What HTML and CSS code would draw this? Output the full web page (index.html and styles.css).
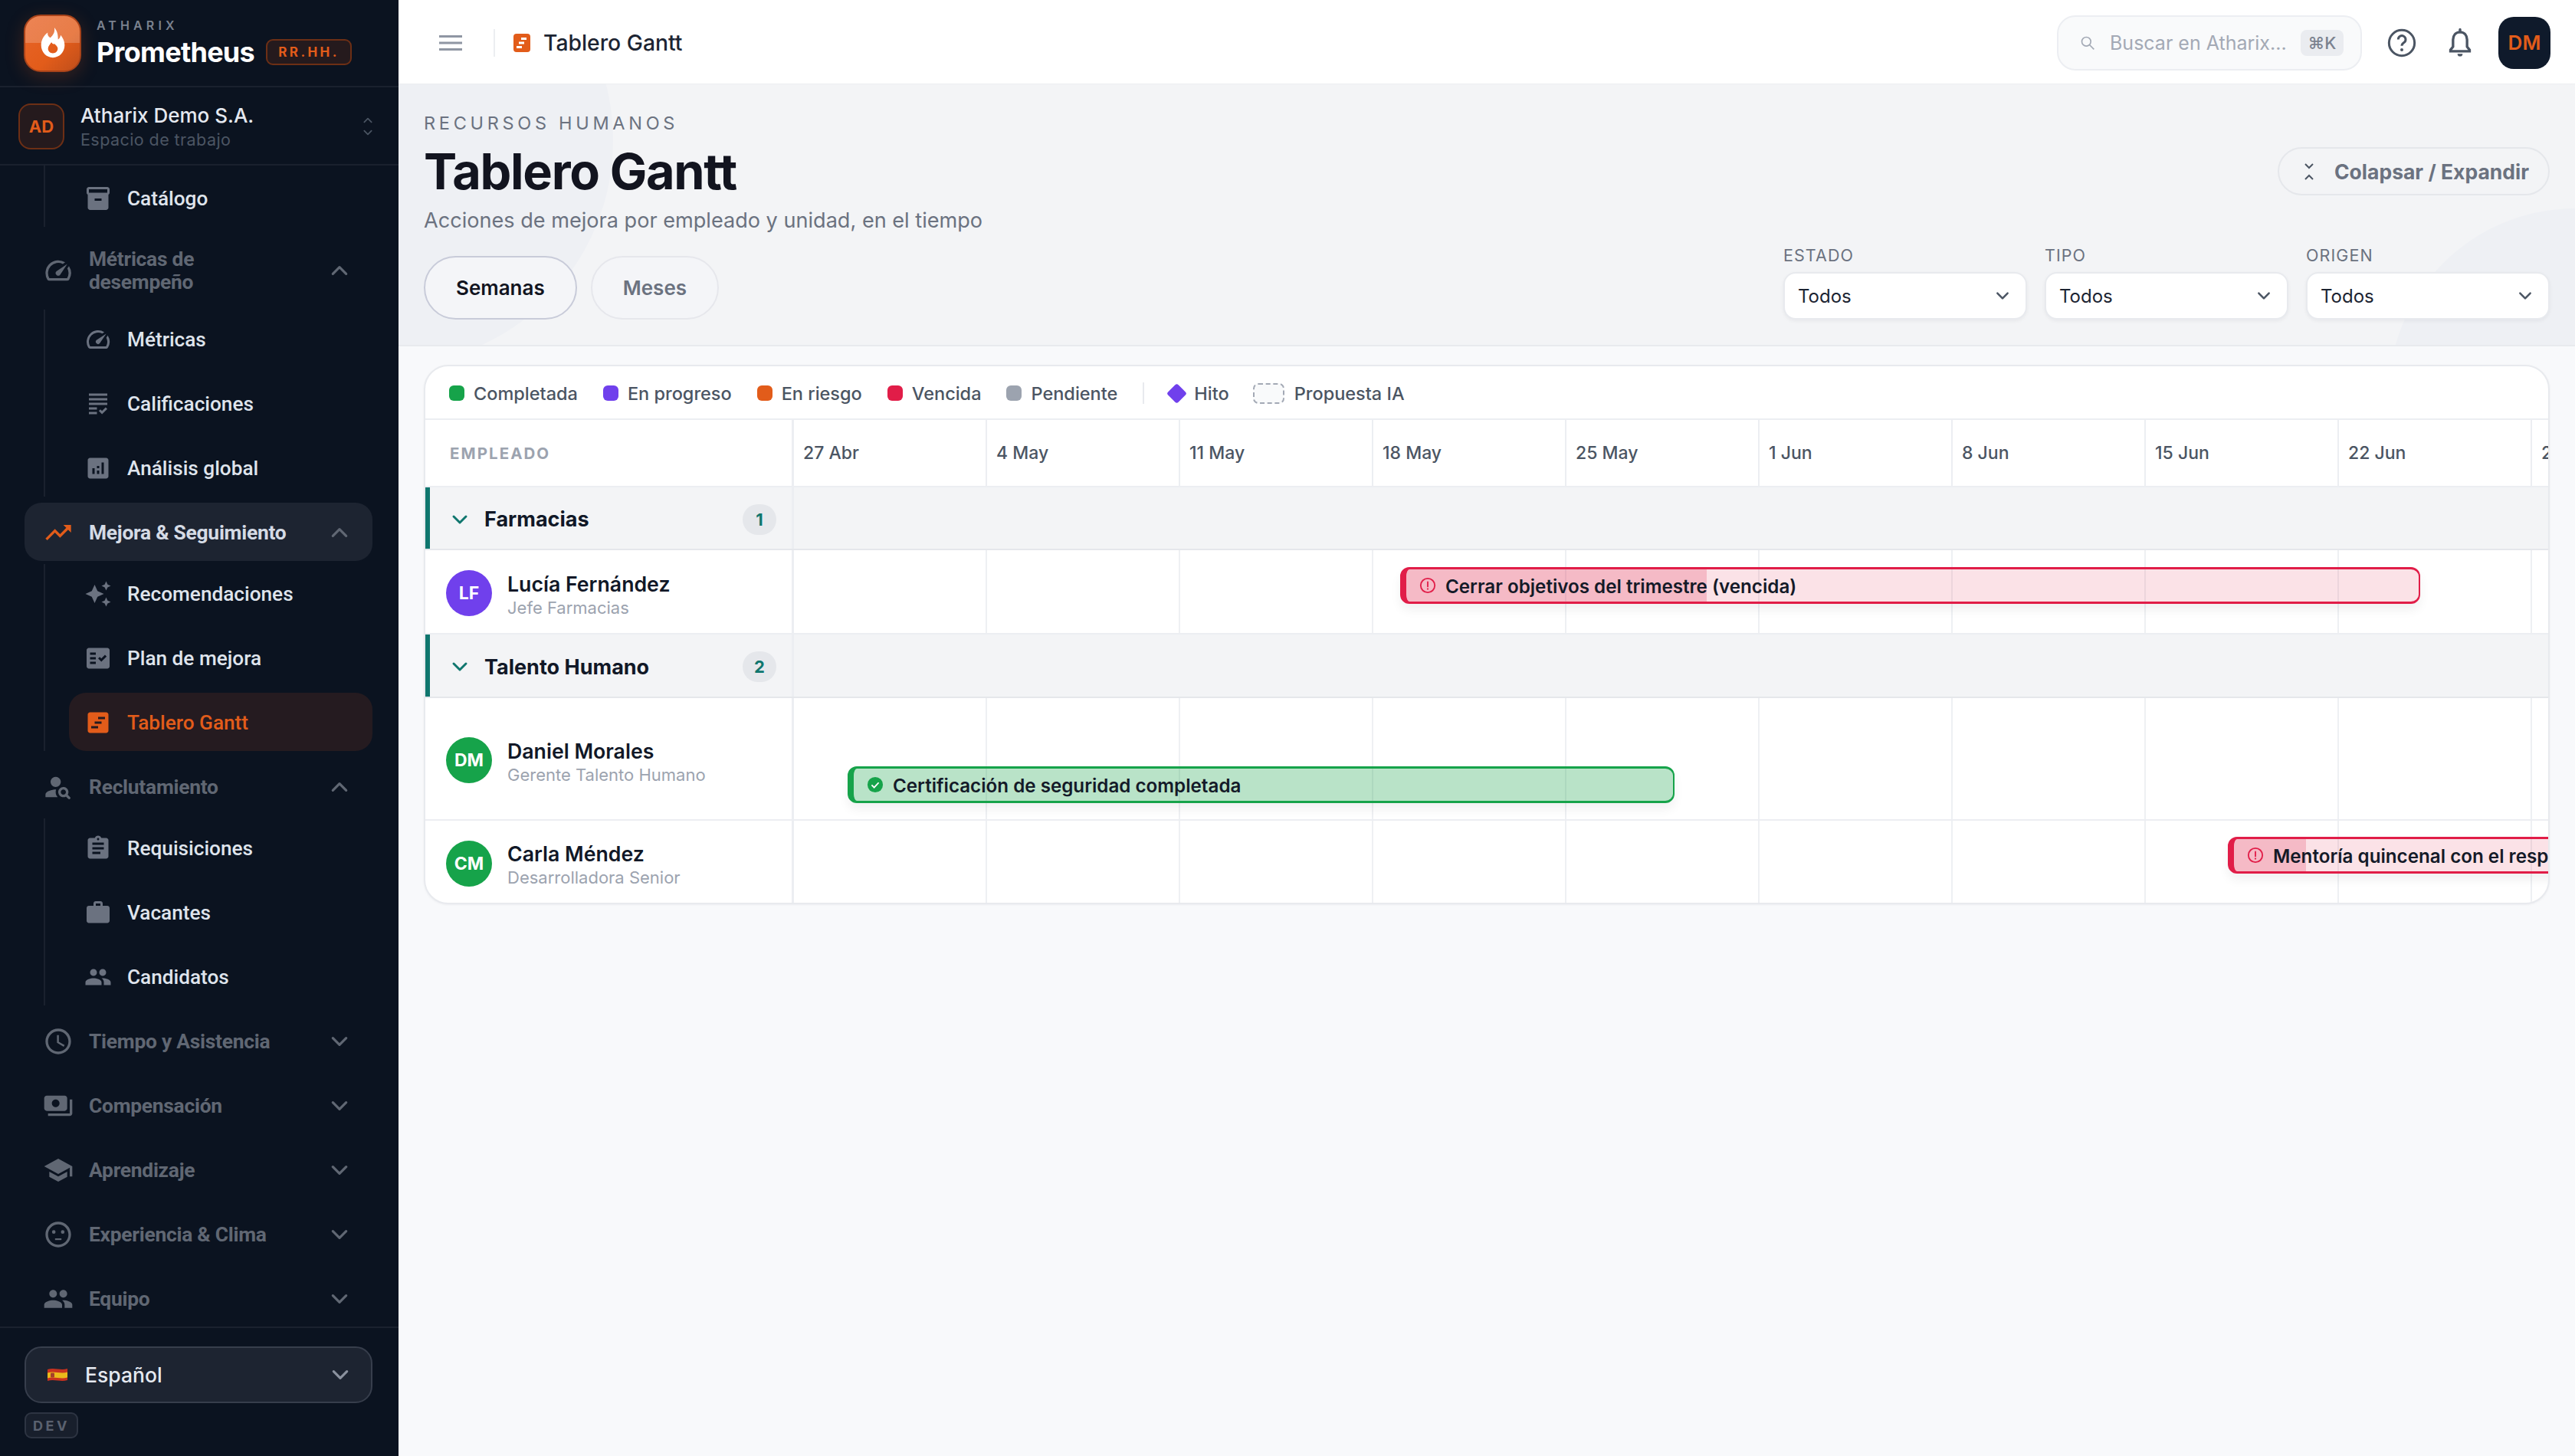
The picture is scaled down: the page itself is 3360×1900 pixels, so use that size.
FILE: index.html
```html
<!DOCTYPE html>
<html lang="es">
<head>
    <meta charset="UTF-8">
    <title>Tablero Gantt</title>
    <link rel="stylesheet" href="styles.css">
</head>
<body>
<svg class="defs" width="0" height="0">
    <symbol id="i-box" viewBox="0 0 24 24"><path d="M20 2H4c-1 0-2 .9-2 2v3.01c0 .72.43 1.34 1 1.69V20c0 1.1 1.1 2 2 2h14c.9 0 2-.9 2-2V8.7c.57-.35 1-.97 1-1.69V4c0-1.1-1-2-2-2zm-5 12H9v-2h6v2zm5-7H4V4l16-.02V7z"/></symbol>
    <symbol id="i-speed" viewBox="0 0 24 24"><path d="M20.38 8.57l-1.23 1.85a8 8 0 0 1-.22 7.58H5.07A8 8 0 0 1 15.58 6.85l1.85-1.23A10 10 0 0 0 3.35 19a2 2 0 0 0 1.72 1h13.85a2 2 0 0 0 1.74-1 10 10 0 0 0-.27-10.44zm-9.79 6.84a2 2 0 0 0 2.83 0l5.66-8.49-8.49 5.66a2 2 0 0 0 0 2.83z"/></symbol>
    <symbol id="i-grading" viewBox="0 0 24 24"><path d="M4 7h16v2H4V7zm0 6h16v-2H4v2zm0 4h7v-2H4v2zm0 4h7v-2H4v2zm11.41-2.83L14 16.75l-1.41 1.41L15.41 21 20 16.42 18.58 15l-3.17 3.17zM4 3v2h16V3H4z"/></symbol>
    <symbol id="i-analytics" viewBox="0 0 24 24"><path d="M19 3H5c-1.1 0-2 .9-2 2v14c0 1.1.9 2 2 2h14c1.1 0 2-.9 2-2V5c0-1.1-.9-2-2-2zM9 17H7v-5h2v5zm4 0h-2v-3h2v3zm0-5h-2v-2h2v2zm4 5h-2V7h2v10z"/></symbol>
    <symbol id="i-trend" viewBox="0 0 24 24"><path d="M16 6l2.29 2.29-4.88 4.88-4-4L2 16.59 3.41 18l6-6 4 4 6.3-6.29L22 12V6z"/></symbol>
    <symbol id="i-spark" viewBox="0 0 24 24"><path d="M19 9l1.25-2.75L23 5l-2.75-1.25L19 1l-1.25 2.75L15 5l2.75 1.25L19 9zm-7.5.5L9 4 6.5 9.5 1 12l5.5 2.5L9 20l2.5-5.5L17 12l-5.5-2.5zM19 15l-1.25 2.75L15 19l2.75 1.25L19 23l1.25-2.75L23 19l-2.75-1.25L19 15z"/></symbol>
    <symbol id="i-fact" viewBox="0 0 24 24"><path d="M20 3H4c-1.1 0-2 .9-2 2v14c0 1.1.9 2 2 2h16c1.1 0 2-.9 2-2V5c0-1.1-.9-2-2-2zM10 17H5v-2h5v2zm0-4H5v-2h5v2zm0-4H5V7h5v2zm4.82 6L12 12.16l1.41-1.41 1.41 1.42L17.99 9l1.42 1.42L14.82 15z"/></symbol>
    <symbol id="i-gantt" viewBox="0 0 24 24"><path fill-rule="evenodd" d="M19 3H5c-1.1 0-2 .9-2 2v14c0 1.1.9 2 2 2h14c1.1 0 2-.9 2-2V5c0-1.1-.9-2-2-2zM12 7h6v2h-6zM9 11h6v2H9zM6 15h6v2H6z"/></symbol>
    <symbol id="i-psearch" viewBox="0 0 24 24"><path d="M10 12c2.21 0 4-1.79 4-4s-1.79-4-4-4-4 1.79-4 4 1.79 4 4 4zm.35 2.01C7.62 13.91 2 15.27 2 18v2h9.54c-2.47-2.76-1.23-5.89-1.19-5.99zM19.43 18.02c.47-.8.7-1.77.48-2.82-.34-1.64-1.72-2.95-3.38-3.16-2.63-.34-4.85 1.87-4.5 4.5.22 1.66 1.52 3.04 3.16 3.38 1.05.22 2.02-.01 2.82-.48l1.86 1.86c.39.39 1.02.39 1.41 0 .39-.39.39-1.02 0-1.41l-1.85-1.87zM16 18c-1.1 0-2-.9-2-2s.9-2 2-2 2 .9 2 2-.9 2-2 2z"/></symbol>
    <symbol id="i-assign" viewBox="0 0 24 24"><path d="M19 3h-4.18C14.4 1.84 13.3 1 12 1c-1.3 0-2.4.84-2.82 2H5c-1.1 0-2 .9-2 2v14c0 1.1.9 2 2 2h14c1.1 0 2-.9 2-2V5c0-1.1-.9-2-2-2zm-7 0c.55 0 1 .45 1 1s-.45 1-1 1-1-.45-1-1 .45-1 1-1zm2 14H7v-2h7v2zm3-4H7v-2h10v2zm0-4H7V7h10v2z"/></symbol>
    <symbol id="i-work" viewBox="0 0 24 24"><path d="M20 6h-4V4c0-1.11-.89-2-2-2h-4c-1.11 0-2 .89-2 2v2H4c-1.11 0-1.99.89-1.99 2L2 19c0 1.11.89 2 2 2h16c1.11 0 2-.89 2-2V8c0-1.11-.89-2-2-2zm-6 0h-4V4h4v2z"/></symbol>
    <symbol id="i-people" viewBox="0 0 24 24"><path d="M16 11c1.66 0 2.99-1.34 2.99-3S17.66 5 16 5c-1.66 0-3 1.34-3 3s1.34 3 3 3zm-8 0c1.66 0 2.99-1.34 2.99-3S9.66 5 8 5C6.34 5 5 6.34 5 8s1.34 3 3 3zm0 2c-2.33 0-7 1.17-7 3.5V19h14v-2.5c0-2.33-4.67-3.5-7-3.5zm8 0c-.29 0-.62.02-.97.05 1.16.84 1.97 1.97 1.97 3.45V19h6v-2.5c0-2.33-4.67-3.5-7-3.5z"/></symbol>
    <symbol id="i-time" viewBox="0 0 24 24"><path d="M11.99 2C6.47 2 2 6.48 2 12s4.47 10 9.99 10C17.52 22 22 17.52 22 12S17.52 2 11.99 2zM12 20c-4.42 0-8-3.58-8-8s3.58-8 8-8 8 3.58 8 8-3.58 8-8 8zm.5-13H11v6l5.25 3.15.75-1.23-4.5-2.67z"/></symbol>
    <symbol id="i-pay" viewBox="0 0 24 24"><path d="M19 14V6c0-1.1-.9-2-2-2H3c-1.1 0-2 .9-2 2v8c0 1.1.9 2 2 2h14c1.1 0 2-.9 2-2zm-9-1c-1.66 0-3-1.34-3-3s1.34-3 3-3 3 1.34 3 3-1.34 3-3 3zm13-6v11c0 1.1-.9 2-2 2H4v-2h17V7h2z"/></symbol>
    <symbol id="i-school" viewBox="0 0 24 24"><path d="M5 13.18v4L12 21l7-3.82v-4L12 17l-7-3.82zM12 3L1 9l11 6 9-4.91V17h2V9L12 3z"/></symbol>
    <symbol id="i-smile" viewBox="0 0 24 24"><path d="M11.99 2C6.47 2 2 6.48 2 12s4.47 10 9.99 10C17.52 22 22 17.52 22 12S17.52 2 11.99 2zM12 20c-4.42 0-8-3.58-8-8s3.58-8 8-8 8 3.58 8 8-3.58 8-8 8z"/><circle cx="8.500" cy="10" r="1.400"/><circle cx="15.500" cy="10" r="1.400"/><path d="M9.500 15h5v1.300h-5z"/></symbol>
    <symbol id="i-down" viewBox="0 0 24 24"><path d="M4 8l8 8 8-8" fill="none" stroke="currentColor" stroke-width="3" stroke-linecap="round" stroke-linejoin="round"/></symbol>
    <symbol id="i-up" viewBox="0 0 24 24"><path d="M4 16l8-8 8 8" fill="none" stroke="currentColor" stroke-width="3" stroke-linecap="round" stroke-linejoin="round"/></symbol>
    <symbol id="i-alert" viewBox="0 0 24 24"><circle cx="12" cy="12" r="10" fill="none" stroke="currentColor" stroke-width="2"/><path d="M12 7v6.500" stroke="currentColor" stroke-width="2" stroke-linecap="round"/><circle cx="12" cy="17" r="1.200"/></symbol>
</svg>

<div class="app">
    <aside class="sidebar">
        <div class="brand">
            <div class="logo">
                <svg viewBox="0 0 24 24" width="46" height="46"><path d="M13 1.500c.6 3.400-1 5.200-2.700 7C8.600 7.600 8.300 6.200 8.500 5 5.700 7.100 4 10.200 4 13.600 4 18.300 7.600 22 12 22s8-3.700 8-8.400c0-3.300-1.500-5.400-2.700-7-.2 1.400-.8 2.400-1.800 3C15.600 6.800 15 3.700 13 1.500zM12 19c-1.900 0-3.300-1.400-3.300-3.100 0-1.700 1.300-2.700 2.300-4.400.7 1.200 1.300 1.600 2.300 1.100.2.700 2 1.500 2 3.300 0 1.700-1.400 3.100-3.300 3.100z" fill-rule="evenodd" fill="#fff"/></svg>
            </div>
            <div class="brand-text">
                <div class="brand-top">ATHARIX</div>
                <div class="brand-name">Prometheus <span class="brand-tag">RR.HH.</span></div>
            </div>
        </div>
        <div class="workspace">
            <div class="ws-avatar">AD</div>
            <div class="ws-text">
                <div class="ws-name">Atharix Demo S.A.</div>
                <div class="ws-sub">Espacio de trabajo</div>
            </div>
            <div class="ws-arrows">
                <svg class="ic-ws"><use href="#i-up"/></svg>
                <svg class="ic-ws"><use href="#i-down"/></svg>
            </div>
        </div>

        <nav class="nav">
            <div class="sublist first">
                <a class="item"><svg class="ic-sub"><use href="#i-box"/></svg>Catálogo</a>
            </div>

            <a class="group tall"><svg class="ic-group"><use href="#i-speed"/></svg><span>Métricas de desempeño</span><svg class="chev"><use href="#i-up"/></svg></a>
            <div class="sublist">
                <a class="item"><svg class="ic-sub"><use href="#i-speed"/></svg>Métricas</a>
                <a class="item"><svg class="ic-sub"><use href="#i-grading"/></svg>Calificaciones</a>
                <a class="item"><svg class="ic-sub"><use href="#i-analytics"/></svg>Análisis global</a>
            </div>

            <a class="group open"><svg class="ic-group"><use href="#i-trend"/></svg><span>Mejora &amp; Seguimiento</span><svg class="chev"><use href="#i-up"/></svg></a>
            <div class="sublist">
                <a class="item"><svg class="ic-sub"><use href="#i-spark"/></svg>Recomendaciones</a>
                <a class="item"><svg class="ic-sub"><use href="#i-fact"/></svg>Plan de mejora</a>
                <a class="item active"><svg class="ic-sub"><use href="#i-gantt"/></svg>Tablero Gantt</a>
            </div>

            <a class="group"><svg class="ic-group"><use href="#i-psearch"/></svg><span>Reclutamiento</span><svg class="chev"><use href="#i-up"/></svg></a>
            <div class="sublist">
                <a class="item"><svg class="ic-sub"><use href="#i-assign"/></svg>Requisiciones</a>
                <a class="item"><svg class="ic-sub"><use href="#i-work"/></svg>Vacantes</a>
                <a class="item"><svg class="ic-sub"><use href="#i-people"/></svg>Candidatos</a>
            </div>

            <a class="group"><svg class="ic-group"><use href="#i-time"/></svg><span>Tiempo y Asistencia</span><svg class="chev"><use href="#i-down"/></svg></a>
            <a class="group"><svg class="ic-group"><use href="#i-pay"/></svg><span>Compensación</span><svg class="chev"><use href="#i-down"/></svg></a>
            <a class="group"><svg class="ic-group"><use href="#i-school"/></svg><span>Aprendizaje</span><svg class="chev"><use href="#i-down"/></svg></a>
            <a class="group"><svg class="ic-group"><use href="#i-smile"/></svg><span>Experiencia &amp; Clima</span><svg class="chev"><use href="#i-down"/></svg></a>
            <a class="group"><svg class="ic-group"><use href="#i-people"/></svg><span>Equipo</span><svg class="chev"><use href="#i-down"/></svg></a>
        </nav>

        <div class="side-foot">
            <div class="lang">
                <svg class="flag" viewBox="0 0 26 20"><path d="M0 3c9-3 17 2 26-1v15c-9 3-17-2-26 1z" fill="#c8321f"/><path d="M0 7.500c9-3 17 2 26-1v7c-9 3-17-2-26 1z" fill="#ecb91b"/><rect x="4" y="7.500" width="5" height="6" rx="1" fill="#a5402a"/></svg>
                <span>Español</span>
                <svg class="chev"><use href="#i-down"/></svg>
            </div>
            <div class="env">DEV</div>
        </div>
    </aside>

    <div class="main">
        <header class="topbar">
            <svg class="burger" viewBox="0 0 30 20"><path d="M0 1.500h30M0 10h30M0 18.500h30" stroke="#8f96a3" stroke-width="3"/></svg>
            <div class="top-div"></div>
            <svg class="top-icon" viewBox="0 0 22 24"><rect width="22" height="24" rx="4" fill="#e25c1a"/><path d="M10 5h7v3h-7zM7 10.500h7v3H7zM4 16h7v3H4z" fill="#fff"/></svg>
            <div class="top-title">Tablero Gantt</div>
            <div class="search">
                <svg class="search-ic" viewBox="0 0 24 24"><circle cx="10" cy="10" r="7" fill="none" stroke="#a3a9b5" stroke-width="2"/><path d="M15 15l7 7" stroke="#a3a9b5" stroke-width="2"/></svg>
                <span class="search-ph">Buscar en Atharix...</span>
                <kbd class="kbd">⌘K</kbd>
            </div>
            <svg class="top-btn" viewBox="0 0 24 24"><circle cx="12" cy="12" r="10" fill="none" stroke="#4b5563" stroke-width="1.800"/><path d="M9.200 9.300a2.900 2.900 0 1 1 4.500 2.400c-1 .7-1.700 1.200-1.700 2.600" fill="none" stroke="#4b5563" stroke-width="1.800"/><circle cx="12" cy="17.400" r="1.200" fill="#4b5563"/></svg>
            <svg class="top-btn bell" viewBox="0 0 24 24"><path d="M12 3.500c-3.500 0-5.500 2.700-5.500 6v5.500L4.500 17.500v1h15v-1L17.500 15V9.500c0-3.300-2-6-5.500-6z" fill="none" stroke="#4b5563" stroke-width="2"/><path d="M12 1.500v2" stroke="#4b5563" stroke-width="2" stroke-linecap="round"/><path d="M10 20.500h4a2 2 0 0 1-4 0z" fill="#4b5563"/></svg>
            <div class="me">DM</div>
        </header>

        <section class="hero">
            <div class="blob blob-left"></div>
            <div class="blob blob-right"></div>
            <div class="hero-top">
                <div>
                    <div class="eyebrow">RECURSOS HUMANOS</div>
                    <h1>Tablero Gantt</h1>
                    <p class="lead">Acciones de mejora por empleado y unidad, en el tiempo</p>
                </div>
                <button class="btn-collapse">
                    <svg viewBox="0 0 14 30" width="14" height="30"><path d="M2 5l5 5 5-5M2 25l5-5 5 5" fill="none" stroke="#4b5563" stroke-width="2"/></svg>
                    Colapsar / Expandir
                </button>
            </div>
            <div class="hero-bottom">
                <div class="tabs">
                    <button class="tab on">Semanas</button>
                    <button class="tab">Meses</button>
                </div>
                <div class="filters">
                    <div class="filter">
                        <label>ESTADO</label>
                        <div class="select">Todos<svg class="chev"><use href="#i-down"/></svg></div>
                    </div>
                    <div class="filter">
                        <label>TIPO</label>
                        <div class="select">Todos<svg class="chev"><use href="#i-down"/></svg></div>
                    </div>
                    <div class="filter">
                        <label>ORIGEN</label>
                        <div class="select">Todos<svg class="chev"><use href="#i-down"/></svg></div>
                    </div>
                </div>
            </div>
        </section>

        <section class="card">
            <div class="legend">
                <span class="lg"><i class="dot green"></i>Completada</span>
                <span class="lg"><i class="dot violet"></i>En progreso</span>
                <span class="lg"><i class="dot orange"></i>En riesgo</span>
                <span class="lg"><i class="dot red"></i>Vencida</span>
                <span class="lg"><i class="dot gray"></i>Pendiente</span>
                <span class="lg-sep"></span>
                <span class="lg hito"><i class="diamond"></i>Hito</span>
                <span class="lg ia"><i class="dashed"></i>Propuesta IA</span>
            </div>

            <div class="row head">
                <div class="emp">EMPLEADO</div>
                <div class="weeks">
                    <div class="wk">27 Abr</div>
                    <div class="wk">4 May</div>
                    <div class="wk">11 May</div>
                    <div class="wk">18 May</div>
                    <div class="wk">25 May</div>
                    <div class="wk">1 Jun</div>
                    <div class="wk">8 Jun</div>
                    <div class="wk">15 Jun</div>
                    <div class="wk">22 Jun</div>
                    <div class="wk">29 Jun</div>
                </div>
            </div>

            <div class="row unit">
                <div class="emp">
                    <svg class="unit-chev"><use href="#i-down"/></svg>
                    <span class="unit-name">Farmacias</span>
                    <span class="count">1</span>
                </div>
                <div class="track"></div>
            </div>
            <div class="row person r-lucia">
                <div class="emp">
                    <div class="av violet">LF</div>
                    <div class="p-text"><div class="p-name">Lucía Fernández</div><div class="p-role">Jefe Farmacias</div></div>
                </div>
                <div class="track">
                    <div class="bar late" style="left:791px;width:1331px;top:22px">
                        <div class="fill" style="width:29.700%"></div>
                        <svg class="bar-ic"><use href="#i-alert"/></svg>
                        <span>Cerrar objetivos del trimestre (vencida)</span>
                    </div>
                </div>
            </div>

            <div class="row unit">
                <div class="emp">
                    <svg class="unit-chev"><use href="#i-down"/></svg>
                    <span class="unit-name">Talento Humano</span>
                    <span class="count">2</span>
                </div>
                <div class="track"></div>
            </div>
            <div class="row person r-daniel">
                <div class="emp">
                    <div class="av green">DM</div>
                    <div class="p-text"><div class="p-name">Daniel Morales</div><div class="p-role">Gerente Talento Humano</div></div>
                </div>
                <div class="track">
                    <div class="bar done" style="left:70px;width:1079px;top:89px">
                        <svg class="bar-ic" viewBox="0 0 24 24"><circle cx="12" cy="12" r="11" fill="#16a34a"/><path d="M7 12.500l3.500 3.500L17 9" fill="none" stroke="#fff" stroke-width="2"/></svg>
                        <span>Certificación de seguridad completada</span>
                    </div>
                </div>
            </div>
            <div class="row person r-carla">
                <div class="emp">
                    <div class="av green">CM</div>
                    <div class="p-text"><div class="p-name">Carla Méndez</div><div class="p-role">Desarrolladora Senior</div></div>
                </div>
                <div class="track">
                    <div class="bar late" style="left:1871px;width:1020px;top:21px">
                        <div class="fill" style="width:9.300%"></div>
                        <svg class="bar-ic"><use href="#i-alert"/></svg>
                        <span>Mentoría quincenal con el responsable</span>
                    </div>
                </div>
            </div>
        </section>
    </div>
</div>
</body>
</html>
```

FILE: styles.css
```css
* {
    box-sizing: border-box;
    margin: 0;
    padding: 0;
}
body {
    font-family: "Inter", "Liberation Sans", sans-serif;
    background: #f8f9fb;
    color: #111827;
    overflow: hidden;
}
.defs {
    position: absolute;
}
svg {
    fill: currentColor;
    flex-shrink: 0;
}
.app {
    display: flex;
    width: 3360px;
    height: 1900px;
    overflow: hidden;
}

/* sidebar */
.sidebar {
    width: 520px;
    flex-shrink: 0;
    display: flex;
    flex-direction: column;
    background: #0b1320;
}
.brand {
    height: 114px;
    flex-shrink: 0;
    display: flex;
    align-items: center;
    gap: 20px;
    padding-left: 31px;
    border-bottom: 2px solid #1a212e;
}
.logo {
    width: 75px;
    height: 75px;
    display: flex;
    align-items: center;
    justify-content: center;
    border-radius: 22px;
    border: 2px solid #a8431a;
    background:
        linear-gradient(rgba(255,255,255,.2) 50%, transparent 50%),
        linear-gradient(135deg, #e8652a, #e25c1a 60%, #bf4e1b);
    box-shadow: 0 6px 24px rgba(226,92,26,.22);
}
.brand-text {
    display: flex;
    flex-direction: column;
    padding-top: 2px;
}
.brand-top {
    font-size: 16px;
    font-weight: 600;
    line-height: 18px;
    letter-spacing: .32em;
    color: #7b828f;
}
.brand-name {
    display: flex;
    align-items: center;
    gap: 15px;
    margin-top: 4px;
    font-size: 36px;
    font-weight: 700;
    line-height: 44px;
    letter-spacing: -.02em;
    color: #fff;
}
.brand-tag {
    width: 112px;
    height: 34px;
    display: flex;
    align-items: center;
    justify-content: center;
    border: 2px solid #6d2f15;
    border-radius: 9px;
    background: #251a1d;
    color: #e25c1a;
    font-size: 17px;
    line-height: 1;
    letter-spacing: .2em;
}
.workspace {
    height: 102px;
    flex-shrink: 0;
    display: flex;
    align-items: center;
    padding: 2px 32px 0 24px;
    border-bottom: 2px solid #1a212e;
}
.ws-avatar {
    width: 60px;
    height: 60px;
    display: flex;
    align-items: center;
    justify-content: center;
    border: 2px solid #6d2f15;
    border-radius: 16px;
    background: #251a1d;
    color: #e25c1a;
    font-size: 22px;
    font-weight: 700;
}
.ws-text {
    flex: 1;
    margin-left: 21px;
}
.ws-name {
    font-size: 26px;
    font-weight: 500;
    line-height: 34px;
    color: #e5e9f0;
}
.ws-sub {
    font-size: 21.500px;
    line-height: 28px;
    letter-spacing: .02em;
    color: #4b5563;
}
.ws-arrows {
    display: flex;
    flex-direction: column;
    gap: 2px;
    color: #4b5563;
}
.ic-ws {
    width: 16px;
    height: 14px;
}
.nav {
    flex: 1;
    min-height: 0;
    overflow: hidden;
    padding: 0 34px 0 32px;
}
.group {
    height: 76px;
    display: flex;
    align-items: center;
    padding: 2px 0 0 24px;
    margin-top: 8px;
    margin-bottom: 4px;
    border-radius: 22px;
    font-family: "Roboto", sans-serif;
    font-size: 26.400px;
    font-weight: 700;
    line-height: 30px;
    letter-spacing: -.01em;
    color: #606773;
}
.group:last-child {
    margin-bottom: 0;
}
.group + .group {
    margin-top: 8px;
    margin-bottom: 0;
}
.group span {
    flex: 1;
    margin-left: 20px;
}
.group.tall {
    height: 96px;
}
.group.tall span {
    flex: none;
    width: 240px;
    margin-right: auto;
}
.group.open {
    background: #1d2431;
    color: #d5dbe5;
}
.group.open .ic-group {
    color: #e25c1a;
}
.ic-group {
    width: 40px;
    height: 40px;
}
.chev {
    width: 26px;
    height: 26px;
}
.group .chev {
    margin-right: 30px;
    color: #606773;
}
.sublist {
    display: flex;
    flex-direction: column;
    gap: 8px;
    margin-left: 25px;
    border-left: 2px solid #1a212e;
}
.sublist.first {
    padding-top: 4px;
}
.item {
    height: 76px;
    display: flex;
    align-items: center;
    gap: 20px;
    margin-left: 31px;
    padding: 2px 0 0 20px;
    border-radius: 22px;
    font-family: "Roboto", sans-serif;
    font-size: 26.200px;
    font-weight: 500;
    color: #dfe4ec;
}
.item .ic-sub {
    color: #6b7280;
}
.item.active {
    background: #251b20;
    color: #e25c1a;
}
.item.active .ic-sub {
    color: #e25c1a;
}
.ic-sub {
    width: 36px;
    height: 36px;
}
.side-foot {
    flex-shrink: 0;
    height: 169px;
    padding: 24px 34px 0 32px;
    border-top: 2px solid #1a212e;
}
.lang {
    height: 74px;
    display: flex;
    align-items: center;
    padding: 0 27px 0 28px;
    border: 2px solid #373e4c;
    border-radius: 22px;
    background: #1d2431;
    color: #e5e9f0;
    font-size: 26.500px;
    font-weight: 500;
}
.lang span {
    flex: 1;
    margin-left: 23px;
}
.lang .chev {
    margin-right: 0;
    color: #8a919e;
}
.flag {
    width: 26px;
    height: 20px;
}
.env {
    width: 70px;
    height: 34px;
    display: flex;
    align-items: center;
    justify-content: center;
    margin-top: 12px;
    border: 2px solid #2d3442;
    border-radius: 9px;
    background: #181f2c;
    color: #5a616f;
    font-size: 18px;
    font-weight: 700;
    letter-spacing: .2em;
}

/* main column */
.main {
    flex: 1;
    min-width: 0;
    display: flex;
    flex-direction: column;
}
.topbar {
    height: 110px;
    flex-shrink: 0;
    display: flex;
    align-items: center;
    padding: 2px 32px 0 53px;
    background: #fff;
    border-bottom: 1px solid #eceef1;
}
.burger {
    width: 30px;
    height: 20px;
}
.top-div {
    width: 2px;
    height: 36px;
    margin-left: 41px;
    background: #eceef1;
}
.top-icon {
    width: 22px;
    height: 24px;
    margin-left: 24px;
}
.top-title {
    flex: 1;
    margin-left: 17px;
    font-size: 28.300px;
    font-weight: 500;
    color: #1c2432;
}
.search {
    width: 398px;
    height: 72px;
    display: flex;
    align-items: center;
    padding: 0 22px 0 28px;
    border: 2px solid #eceef2;
    border-radius: 24px;
    background: #f9fafb;
}
.search-ic {
    width: 20px;
    height: 20px;
}
.search-ph {
    flex: 1;
    margin-left: 19px;
    font-size: 25px;
    color: #a3a9b5;
    white-space: nowrap;
}
.kbd {
    width: 56px;
    height: 34px;
    display: flex;
    align-items: center;
    justify-content: center;
    border-radius: 8px;
    background: #eaecf0;
    color: #7b828f;
    font-family: "Inter", sans-serif;
    font-size: 22px;
    font-weight: 500;
}
.top-btn {
    width: 40px;
    height: 40px;
    margin-left: 32px;
}
.top-btn.bell {
    margin-left: 36px;
}
.me {
    width: 68px;
    height: 68px;
    display: flex;
    align-items: center;
    justify-content: center;
    margin-left: 30px;
    border-radius: 20px;
    background: #0f1a2b;
    color: #e25c1a;
    font-size: 26px;
    font-weight: 600;
}

/* hero */
.hero {
    position: relative;
    height: 342px;
    flex-shrink: 0;
    overflow: hidden;
    padding: 35px 33px 0;
    background: #f3f4f6;
    border-bottom: 2px solid #e8eaee;
}
.blob {
    position: absolute;
    border-radius: 50%;
    background: #eef0f4;
}
.blob-left {
    left: -308px;
    top: -221px;
    width: 588px;
    height: 588px;
}
.blob-right {
    left: 2597px;
    top: 162px;
    width: 486px;
    height: 486px;
}
.hero-top, .hero-bottom {
    position: relative;
    display: flex;
    justify-content: space-between;
}
.eyebrow {
    font-size: 23.500px;
    line-height: 32px;
    letter-spacing: .2em;
    color: #6b7280;
}
h1 {
    margin-top: 9px;
    font-size: 64.800px;
    font-weight: 700;
    line-height: 76px;
    letter-spacing: -.02em;
    color: #12141f;
}
.lead {
    margin-top: 6px;
    font-size: 27.100px;
    line-height: 40px;
    color: #6b7280;
}
.btn-collapse {
    height: 63px;
    display: flex;
    align-items: center;
    gap: 26px;
    margin-top: 47px;
    padding: 0 25px 0 32px;
    border: 2px solid #e5e7eb;
    border-radius: 32px;
    background: #f3f4f6;
    color: #6b7280;
    font-family: inherit;
    font-size: 26.500px;
    font-weight: 700;
}
.hero-bottom {
    align-items: flex-end;
    margin-top: 12px;
}
.tabs {
    display: flex;
    gap: 18px;
}
.tab {
    height: 83px;
    padding: 0 40px;
    border: 2px solid #e6e7ec;
    border-radius: 42px;
    background: #f4f5f8;
    color: #6b7280;
    font-family: inherit;
    font-size: 26px;
    font-weight: 600;
}
.tab.on {
    border-color: #c8cbd9;
    color: #12141f;
}
.filters {
    display: flex;
    gap: 23px;
}
.filter {
    width: 318px;
}
.filter label {
    display: block;
    margin-bottom: 9px;
    font-size: 21.500px;
    line-height: 26px;
    letter-spacing: .05em;
    color: #6b7280;
}
.select {
    height: 62px;
    display: flex;
    align-items: center;
    justify-content: space-between;
    padding: 0 20px 0 17px;
    border: 2px solid #e8eaee;
    border-radius: 16px;
    background: #fff;
    box-shadow: 0 2px 5px rgba(17,24,39,.05);
    color: #1c2432;
    font-size: 24px;
}
.select .chev {
    width: 20px;
    height: 20px;
    color: #4b5563;
}

/* gantt card */
.card {
    margin: 24px 33px 0;
    border: 2px solid #e8eaee;
    border-radius: 32px;
    background: #fff;
    overflow: hidden;
    box-shadow: 0 1px 3px rgba(17,24,39,.05);
}
.legend {
    height: 70px;
    display: flex;
    align-items: center;
    gap: 33px;
    padding: 2px 0 0 31px;
    border-bottom: 2px solid #eceef2;
}
.lg {
    display: flex;
    align-items: center;
    gap: 12px;
    font-size: 23.500px;
    font-weight: 500;
    color: #4b5563;
}
.dot {
    width: 20px;
    height: 20px;
    border-radius: 6px;
}
.dot.green { background: #16a34a; }
.dot.violet { background: #7040ec; }
.dot.orange { background: #e25c1a; }
.dot.red { background: #e11d48; }
.dot.gray { background: #9ca3af; }
.lg-sep {
    width: 2px;
    height: 28px;
    background: #e8eaee;
}
.diamond {
    width: 19px;
    height: 19px;
    margin: 0 3px;
    border-radius: 3px;
    background: #7040ec;
    transform: rotate(45deg);
}
.lg.hito {
    margin-left: -3px;
    gap: 10px;
}
.lg.ia {
    gap: 13px;
    margin-left: -2px;
}
.dashed {
    width: 41px;
    height: 27px;
    border: 2px dashed #a3a9b5;
    border-radius: 7px;
    background: #f9fafb;
}
.row {
    display: flex;
    border-bottom: 2px solid #eceef2;
}
.row:last-child {
    border-bottom: 0;
}
.emp {
    width: 481px;
    flex-shrink: 0;
    display: flex;
    align-items: center;
    border-right: 3px solid #eceef2;
}
.head {
    height: 88px;
}
.head .emp {
    padding-left: 32px;
    font-size: 20.500px;
    font-weight: 700;
    letter-spacing: .1em;
    color: #9ca3af;
}
.weeks {
    display: flex;
}
.wk {
    width: 252px;
    flex-shrink: 0;
    padding-left: 12px;
    display: flex;
    align-items: center;
    border-right: 2px solid #eceef2;
    font-size: 23px;
    font-weight: 500;
    color: #4b5563;
}
.unit {
    height: 82px;
    background: #f3f4f6;
    border-bottom-color: #e5e7eb;
}
.person + .unit {
    height: 83px;
}
.unit .emp {
    padding: 3px 20px 0 27px;
    border-left: 6px solid #0f766e;
    border-right-color: #eceef2;
}
.unit-chev {
    width: 24px;
    height: 24px;
    color: #0f766e;
}
.unit-name {
    flex: 1;
    margin-left: 20px;
    font-size: 27px;
    font-weight: 700;
    color: #111827;
}
.count {
    width: 44px;
    height: 40px;
    display: flex;
    align-items: center;
    justify-content: center;
    border-radius: 20px;
    background: #e5e7eb;
    color: #0f766e;
    font-size: 22px;
    font-weight: 700;
}
.person .emp {
    gap: 20px;
    padding-left: 27px;
}
.r-lucia { height: 110px; }
.r-daniel { height: 160px; }
.r-carla { height: 107px; }
.av {
    width: 60px;
    height: 60px;
    flex-shrink: 0;
    display: flex;
    align-items: center;
    justify-content: center;
    margin-top: 4px;
    border-radius: 50%;
    color: #fff;
    font-size: 23px;
    font-weight: 700;
}
.av.violet { background: #7040ec; }
.av.green { background: #16a34a; }
.p-text {
    padding-top: 8px;
}
.p-name {
    font-size: 26.700px;
    font-weight: 600;
    line-height: 33px;
    color: #111827;
}
.p-role {
    font-size: 22px;
    line-height: 28px;
    color: #9ca3af;
}
.track {
    position: relative;
    flex: 1;
    min-width: 0;
}
.person .track {
    background: repeating-linear-gradient(90deg, transparent 0 250px, #eef0f3 250px 252px);
}
.bar {
    position: absolute;
    height: 48px;
    display: flex;
    align-items: center;
    padding-left: 17px;
    border: 3px solid;
    border-left-width: 8px;
    border-right-width: 2px;
    border-radius: 12px;
    box-shadow: 0 8px 14px rgba(17,24,39,.06);
    color: #141a28;
    font-size: 24.200px;
    font-weight: 600;
    white-space: nowrap;
}
.bar span {
    position: relative;
    margin-left: 12px;
    padding-top: 3px;
}
.bar.late {
    border-color: #e11d48;
    background: rgba(225,29,72,.13);
}
.bar.done {
    border-color: #16a34a;
    background: rgba(22,163,74,.3);
}
.fill {
    position: absolute;
    left: 0;
    top: 0;
    bottom: 0;
    background: rgba(225,29,72,.2);
}
.bar-ic {
    position: relative;
    width: 22px;
    height: 22px;
}
.late .bar-ic {
    color: #e11d48;
}
```
